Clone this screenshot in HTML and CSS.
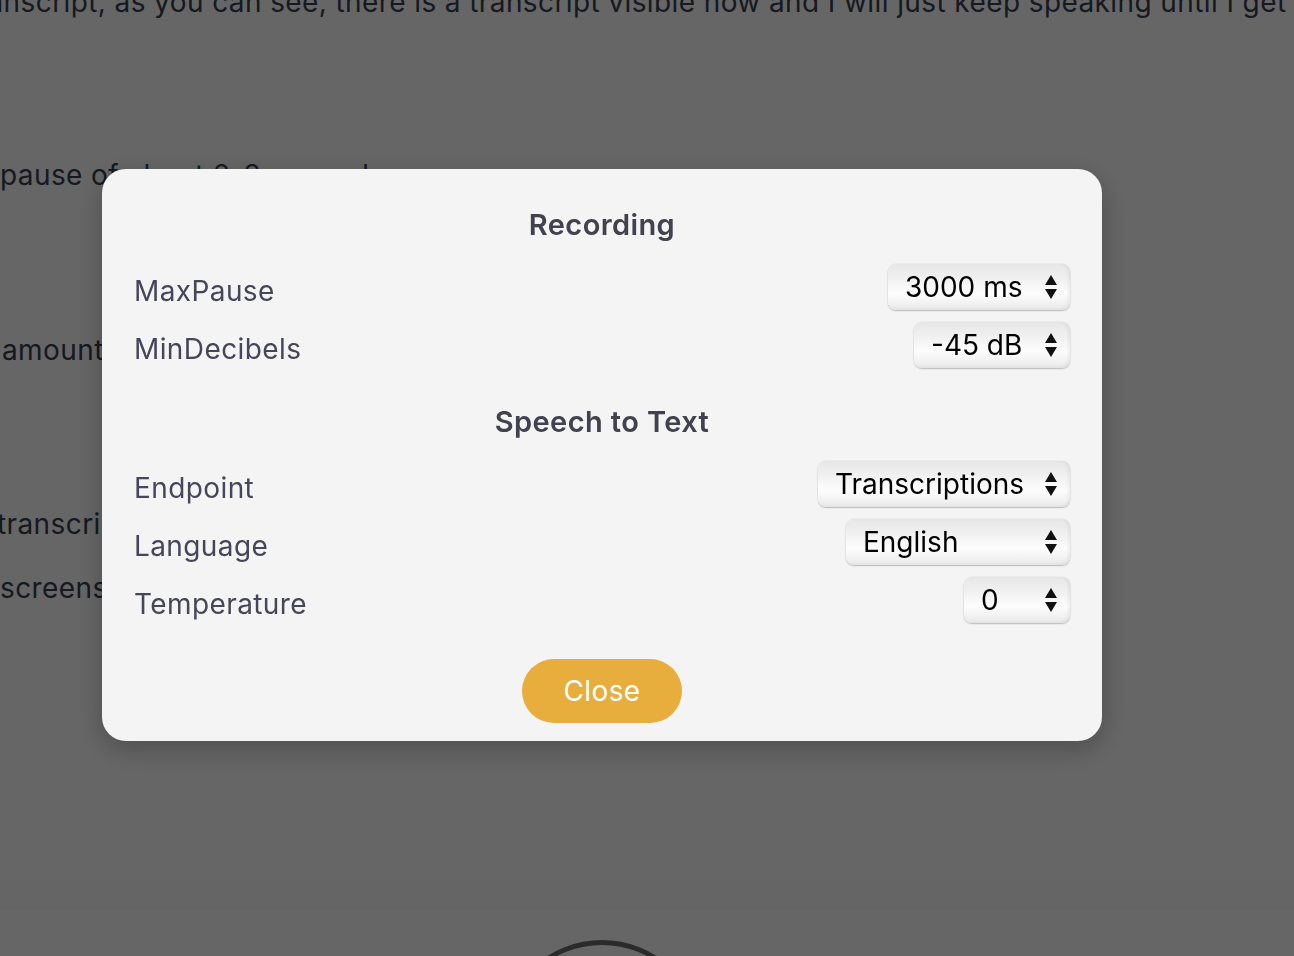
FILE: index.html
```html
<!DOCTYPE html>
<html lang="en">
<head>
<meta charset="utf-8">
<title>Settings</title>
<link rel="stylesheet" href="styles.css">
</head>
<body>
<div class="page">
  <main class="transcript">
    <div class="line line-1">transcript, as you can see, there is a transcript visible now and I will just keep speaking until I get</div>
    <div class="line line-2">pause of about 2-3 seconds or so</div>
    <div class="line line-3">amount</div>
    <div class="line line-4">transcript</div>
    <div class="line line-5">screenshot</div>
  </main>
  <footer class="footer">
    <div class="record-ring"></div>
  </footer>
</div>

<div class="overlay">
  <div class="dialog">
    <section class="section">
      <h2 class="section-title">Recording</h2>
      <div class="rows">
        <div class="row">
          <span class="label">MaxPause</span>
          <div class="select w-pause"><span class="select-value">3000 ms</span><svg class="arrows" width="12" height="24" viewBox="0 0 12 24"><polygon points="6,0 12,10 0,10"/><polygon points="0,14 12,14 6,24"/></svg></div>
        </div>
        <div class="row">
          <span class="label">MinDecibels</span>
          <div class="select w-db"><span class="select-value">-45 dB</span><svg class="arrows" width="12" height="24" viewBox="0 0 12 24"><polygon points="6,0 12,10 0,10"/><polygon points="0,14 12,14 6,24"/></svg></div>
        </div>
      </div>
    </section>
    <section class="section">
      <h2 class="section-title">Speech to Text</h2>
      <div class="rows">
        <div class="row">
          <span class="label">Endpoint</span>
          <div class="select w-endpoint"><span class="select-value">Transcriptions</span><svg class="arrows" width="12" height="24" viewBox="0 0 12 24"><polygon points="6,0 12,10 0,10"/><polygon points="0,14 12,14 6,24"/></svg></div>
        </div>
        <div class="row">
          <span class="label">Language</span>
          <div class="select w-lang"><span class="select-value">English</span><svg class="arrows" width="12" height="24" viewBox="0 0 12 24"><polygon points="6,0 12,10 0,10"/><polygon points="0,14 12,14 6,24"/></svg></div>
        </div>
        <div class="row">
          <span class="label">Temperature</span>
          <div class="select w-temp"><span class="select-value">0</span><svg class="arrows" width="12" height="24" viewBox="0 0 12 24"><polygon points="6,0 12,10 0,10"/><polygon points="0,14 12,14 6,24"/></svg></div>
        </div>
      </div>
    </section>
    <div class="actions">
      <button class="close-btn" type="button">Close</button>
    </div>
  </div>
</div>
</body>
</html>
```
FILE: styles.css
```css
* { box-sizing: border-box; }

html, body {
  margin: 0;
  padding: 0;
  height: 100%;
  overflow: hidden;
}

body {
  font-family: Inter, "Liberation Sans", sans-serif;
  background: #ffffff;
  color: #374151;
}

.page {
  height: 956px;
  display: flex;
  flex-direction: column;
  overflow: hidden;
}

.transcript {
  flex: none;
  height: 910px;
  overflow: hidden;
  background: linear-gradient(to bottom, #ffffff 0, #ffffff 860px, #fbfbfb 910px);
}

.line {
  font-size: 28px;
  line-height: 36px;
  letter-spacing: 0.4px;
  white-space: nowrap;
  color: #374151;
}

.line-1 { margin-top: -16px; margin-left: -33px; }
.line-2 { margin-top: 137px; margin-left: 0; }
.line-3 { margin-top: 139px; margin-left: 2px; }
.line-4 { margin-top: 138px; margin-left: -3px; }
.line-5 { margin-top: 28px; margin-left: 0; }

.footer {
  flex: 1;
  min-height: 0;
  overflow: hidden;
  display: flex;
  justify-content: center;
  align-items: flex-start;
  padding-right: 90px;
  padding-top: 30px;
  background: #ffffff;
}

.record-ring {
  width: 204px;
  height: 204px;
  flex: none;
  border-radius: 50%;
  border: 5px solid #6c6c6c;
}

.overlay {
  position: fixed;
  inset: 0;
  background: rgba(0, 0, 0, 0.6);
  display: flex;
  justify-content: center;
  align-items: flex-start;
  padding: 169px 90px 0 0;
}

.dialog {
  width: 1000px;
  background: #f4f4f4;
  border-radius: 24px;
  padding: 38px 32px 18px;
  display: flex;
  flex-direction: column;
  gap: 36px;
  box-shadow: 0 8px 28px rgba(0, 0, 0, 0.25);
}

.section {
  display: flex;
  flex-direction: column;
  gap: 21px;
}

.section-title {
  margin: 0;
  text-align: center;
  font-size: 29px;
  line-height: 36px;
  letter-spacing: 0.4px;
  font-weight: 600;
  color: #41414f;
}

.rows {
  display: flex;
  flex-direction: column;
  gap: 12px;
}

.row {
  display: flex;
  justify-content: space-between;
  align-items: flex-end;
}

.label {
  font-size: 28px;
  line-height: 38px;
  letter-spacing: 0.4px;
  color: #46465a;
}

.select {
  height: 46px;
  display: flex;
  align-items: center;
  justify-content: space-between;
  padding: 0 13px 0 17px;
  border-radius: 8px;
  background: linear-gradient(to bottom, #e7e7e7 0%, #efefef 28%, #f8f8f8 50%, #fdfdfd 64%, #efefef 90%, #e4e4e4 100%);
  box-shadow: 0 1px 1.5px rgba(0, 0, 0, 0.22), 0 0 0 0.5px rgba(0, 0, 0, 0.06), inset -3px 0 4px -2px rgba(0, 0, 0, 0.08);
  font-size: 28px;
  color: #000000;
}

.select-value { line-height: 34px; }

.arrows { flex: none; fill: #111111; }

.w-pause { width: 182px; }
.w-db { width: 156px; }
.w-endpoint { width: 252px; }
.w-lang { width: 224px; }
.w-temp { width: 106px; }

.actions {
  display: flex;
  justify-content: center;
}

.close-btn {
  width: 160px;
  height: 64px;
  border: none;
  border-radius: 32px;
  background: #e8ae3d;
  color: #ffffff;
  font-family: Inter, "Liberation Sans", sans-serif;
  font-size: 28px;
  letter-spacing: 0.4px;
  padding: 0;
  cursor: pointer;
}
```
